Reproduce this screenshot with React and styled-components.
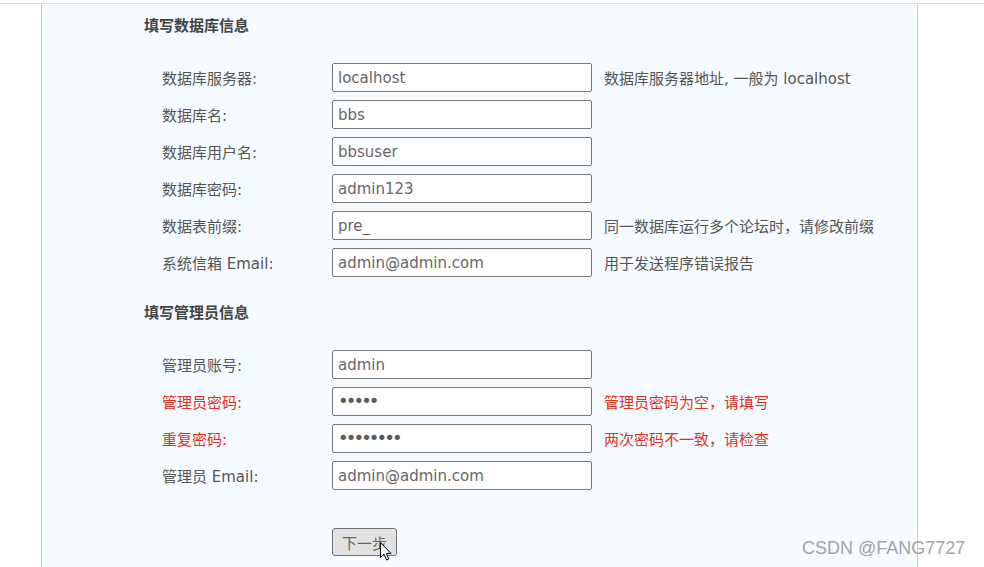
import styled, { createGlobalStyle } from "styled-components";

const GlobalStyle = createGlobalStyle`
  html, body {
    margin: 0;
    padding: 0;
    background: #ffffff;
  }
  body {
    font-family: "DejaVu Sans", "Noto Sans CJK SC", sans-serif;
    font-size: 15px;
    color: #555;
    overflow: hidden;
  }
`;

const dbFields = [
  { label: "数据库服务器:", value: "localhost", hint: "数据库服务器地址, 一般为 localhost" },
  { label: "数据库名:", value: "bbs" },
  { label: "数据库用户名:", value: "bbsuser" },
  { label: "数据库密码:", value: "admin123" },
  { label: "数据表前缀:", value: "pre_", hint: "同一数据库运行多个论坛时，请修改前缀" },
  { label: "系统信箱 Email:", value: "admin@admin.com", hint: "用于发送程序错误报告" },
];

const adminFields = [
  { label: "管理员账号:", value: "admin" },
  { label: "管理员密码:", value: "•••••", hint: "管理员密码为空，请填写", error: true, dots: true },
  { label: "重复密码:", value: "••••••••", hint: "两次密码不一致，请检查", error: true, dots: true },
  { label: "管理员 Email:", value: "admin@admin.com" },
];

function FieldRows({ fields }) {
  return (
    <Rows>
      {fields.map((f) => (
        <Row key={f.label}>
          <Label $error={f.error}>{f.label}</Label>
          <Input $dots={f.dots}>{f.value}</Input>
          {f.hint ? <Hint $error={f.error}>{f.hint}</Hint> : null}
        </Row>
      ))}
    </Rows>
  );
}

export default function App() {
  return (
    <Page>
      <GlobalStyle />
      <TopLine />
      <Panel>
        <SectionTitle>填写数据库信息</SectionTitle>
        <FieldRows fields={dbFields} />
        <SectionTitle $second>填写管理员信息</SectionTitle>
        <FieldRows fields={adminFields} />
        <ButtonRow>
          <NextButton>
            下一步
            <Cursor viewBox="0 0 12 19" width="12" height="19">
              <path
                d="M0.5 0.5 L0.5 15.5 L4 12.2 L6.6 18 L8.8 17 L6.3 11.4 L11 11.4 Z"
                fill="#fff"
                stroke="#000"
                strokeWidth="1"
                strokeLinejoin="round"
              />
            </Cursor>
          </NextButton>
        </ButtonRow>
      </Panel>
      <Watermark>CSDN @FANG7727</Watermark>
    </Page>
  );
}

const Page = styled.div`
  position: relative;
  width: 984px;
  height: 567px;
  overflow: hidden;
`;

const TopLine = styled.div`
  height: 3px;
  border-bottom: 1px solid #dcdcdc;
`;

const Panel = styled.div`
  margin-left: 41px;
  width: 877px;
  height: 600px;
  box-sizing: border-box;
  background: #f5fbfe;
  border-left: 1px solid #b8d0d6;
  border-right: 1px solid #b8d0d6;
  padding: 12px 0 0 102px;
`;

const SectionTitle = styled.div`
  font-weight: bold;
  font-size: 15px;
  line-height: 20px;
  color: #444;
  margin-top: ${(p) => (p.$second ? "26px" : "0")};
  margin-bottom: 27px;
`;

const Rows = styled.div`
  display: flex;
  flex-direction: column;
  gap: 8px;
  padding-left: 18px;
`;

const Row = styled.div`
  display: grid;
  grid-template-columns: 170px 260px auto;
  align-items: center;
  height: 29px;
`;

const Label = styled.div`
  color: ${(p) => (p.$error ? "#e0301e" : "#555")};
  white-space: nowrap;
`;

const Input = styled.div`
  box-sizing: border-box;
  height: 29px;
  border: 1px solid #777;
  border-radius: 2px;
  background: #fff;
  padding: 0 4px 0 5px;
  line-height: ${(p) => (p.$dots ? "26px" : "28px")};
  color: ${(p) => (p.$dots ? "#5a5a5a" : "#666")};
  letter-spacing: ${(p) => (p.$dots ? "-2.9px" : "0")};
  font-size: ${(p) => (p.$dots ? "18px" : "15px")};
  white-space: nowrap;
  overflow: hidden;
`;

const Hint = styled.div`
  padding-left: 12px;
  color: ${(p) => (p.$error ? "#e0301e" : "#555")};
  white-space: nowrap;
`;

const ButtonRow = styled.div`
  padding: 38px 0 0 188px;
`;

const NextButton = styled.button`
  position: relative;
  width: 65px;
  height: 28px;
  padding: 0;
  border: 1px solid #707070;
  border-radius: 3px;
  background: #e1e1e1;
  color: #666;
  font-family: "Noto Sans CJK SC", sans-serif;
  font-size: 15px;
`;

const Cursor = styled.svg`
  position: absolute;
  left: 47px;
  top: 13px;
`;

const Watermark = styled.div`
  position: absolute;
  left: 802px;
  top: 538px;
  font-family: "Liberation Sans", sans-serif;
  font-size: 18px;
  color: #a4a4a4;
  white-space: nowrap;
`;
